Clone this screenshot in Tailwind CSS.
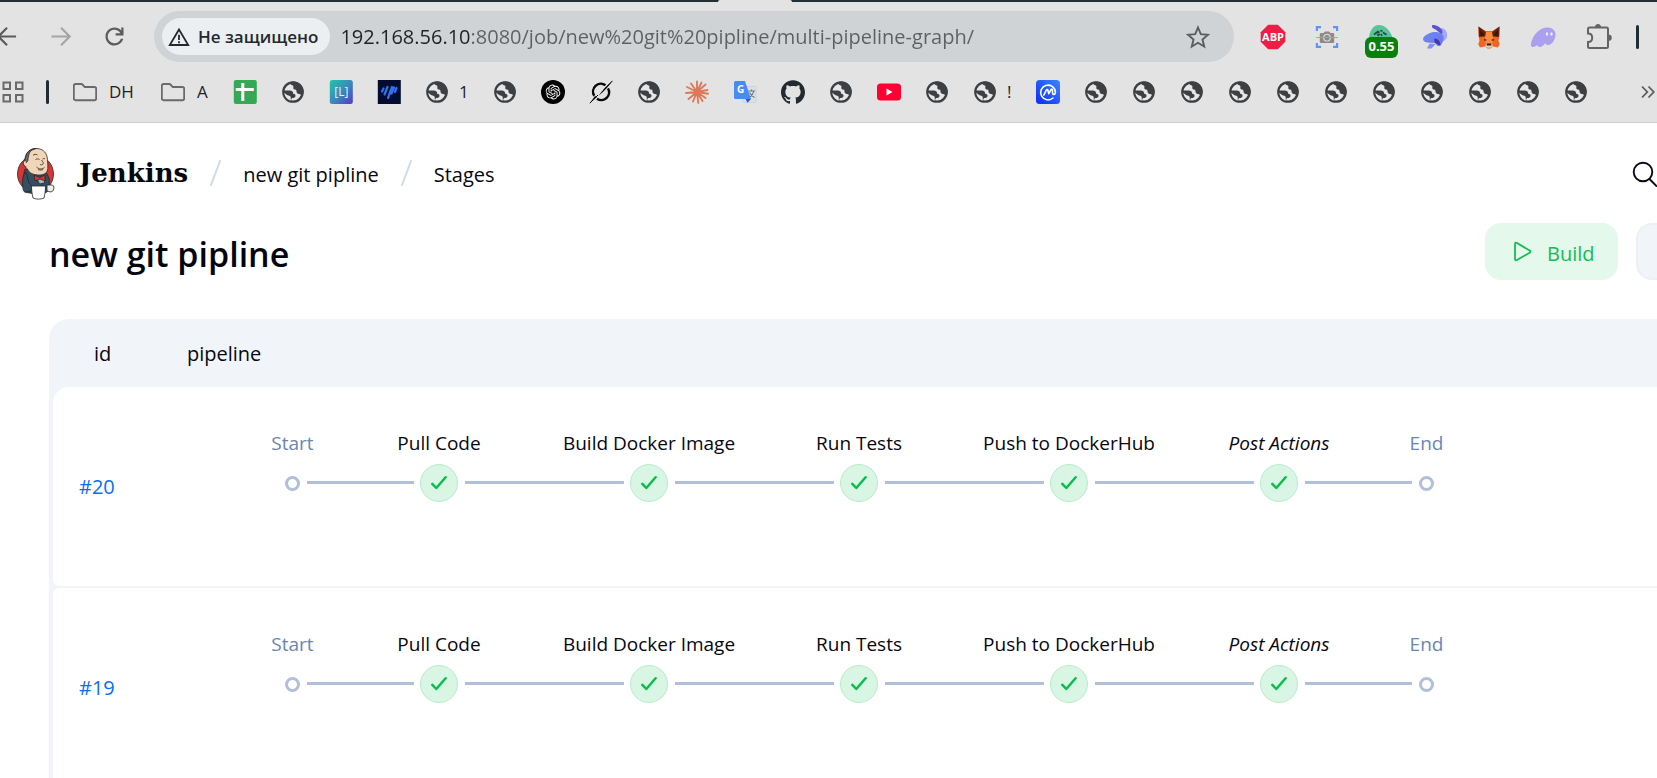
<!DOCTYPE html>
<html lang="ru">
<head>
<meta charset="utf-8">
<meta name="viewport" content="width=device-width, initial-scale=1">
<title>new git pipline - Stages [Jenkins]</title>
<script src="https://cdn.jsdelivr.net/npm/@tailwindcss/browser@4"></script>
</head>
<body class="h-screen overflow-hidden bg-white font-['Open_Sans','Noto_Sans',sans-serif] text-[#07070f]">

<!-- Shared icons -->
<svg class="hidden" aria-hidden="true">
  <symbol id="globe" viewBox="0 0 24 24">
    <circle cx="12" cy="12" r="9.700" fill="#e6e6e6" stroke="#3c4043" stroke-width="2.300"/>
    <path fill="#3c4043" d="M9.500 2C9 3.500 9.500 5 11 5.300c1.500.2 1.600 1.200 1.300 2.200-.3 1.200.7 2 1.900 2.100 1 .1 1.300.8 1.300 1.900 0 1.500 1.100 2.300 2.500 2.500 1.600.2 2 1.500 3.200 1.500L22.500 12C22.500 6 18 1.500 12 1.500z"/>
    <path fill="#3c4043" d="M2 10.600h6.700c2.200 0 3.400 1.200 3.500 3.200 1.700.1 2.600 1 2.300 2.500-.3 1.300-1.600 1.900-3.500 1.800L9.500 21C5 20 2 16 2 12z"/>
    <path fill="#e6e6e6" d="M3.400 12.800c2 2.200 3.500 2.600 5 3 1.300.4 1.400 1.500 1.400 2.600v2.200c-3.400-.8-6.200-4-6.400-7.800z"/>
  </symbol>
  <symbol id="folder" viewBox="0 0 24 24">
    <path d="M2.500 4h6.300l3 3H21.500a1.700 1.700 0 0 1 1.700 1.700V18.500a1.700 1.700 0 0 1-1.700 1.700H2.500a1.700 1.700 0 0 1-1.700-1.700V5.700A1.700 1.700 0 0 1 2.500 4z" fill="none" stroke="#6a6a6a" stroke-width="1.900"/>
  </symbol>
  <symbol id="check" viewBox="0 0 16 16">
    <path d="M1.300 8.800l4 4.200 9.300-10.700" fill="none" stroke="#09bf4b" stroke-width="2.500" stroke-linecap="round" stroke-linejoin="round"/>
  </symbol>
</svg>

<!-- Browser toolbar -->
<div class="flex h-[123px] flex-col border-b border-[#cdcdcd] bg-[#e3e3e3]">
  <div class="flex h-0.5 justify-center bg-[#232e35]">
    <div class="mr-[148px] h-0.5 w-[74px] rounded-t-xs bg-[#e3e3e3]"></div>
  </div>
  <div class="mt-[9px] flex h-[51px] items-center">
    <nav class="-ml-[7px] flex items-center gap-[27px]" aria-label="Browser navigation">
      <button class="size-[27px]" aria-label="Back"><svg viewBox="0 0 24 24" class="size-[27px]" fill="none" stroke="#5c5c5c" stroke-width="1.900"><path d="M20.500 12H5M12.500 4.200L4.800 12l7.700 7.800"/></svg></button>
      <button class="size-[27px]" aria-label="Forward"><svg viewBox="0 0 24 24" class="size-[27px]" fill="none" stroke="#a5a5a5" stroke-width="1.900"><path d="M4 12h15.500M12.500 4.200l7.700 7.800-7.700 7.800"/></svg></button>
      <button class="size-[27px]" aria-label="Reload"><svg viewBox="0 0 24 24" class="size-[27px]" fill="#5c5c5c"><path d="M12 20c-2.230 0-4.130-.770-5.680-2.320C4.770 16.130 4 14.230 4 12s.77-4.130 2.320-5.680C7.870 4.770 9.770 4 12 4c1.150 0 2.250.240 3.300.710A7.900 7.900 0 0 1 18 6.750V4h2v7h-7V9h4.200c-.530-.930-1.260-1.670-2.190-2.200A5.900 5.900 0 0 0 12 6c-1.670 0-3.080.580-4.250 1.750S6 10.330 6 12s.58 3.080 1.750 4.250S10.330 18 12 18c1.280 0 2.440-.370 3.480-1.100A5.850 5.850 0 0 0 17.650 14h2.100c-.470 1.770-1.420 3.210-2.850 4.330C15.470 19.440 13.830 20 12 20z"/></svg></button>
    </nav>
    <div class="ml-[26px] flex h-[51px] flex-1 items-center rounded-full bg-[#cfd3d6] pr-6 pl-2">
      <button class="flex h-[37px] items-center rounded-full bg-[#ebeff2] pr-3 pl-1.5 text-[17px] font-semibold whitespace-nowrap text-[#24282c]">
        <svg viewBox="0 0 22 20" class="mr-2 h-5 w-[22px]" fill="none" stroke="#24282c" stroke-width="1.800"><path d="M11 2.500L1.800 18h18.400z"/><path d="M11 7.800v5.200M11 14.200v2"/></svg>
        Не защищено
      </button>
      <input type="text" aria-label="Address" value="192.168.56.10:8080/job/new%20git%20pipline/multi-pipeline-graph/" class="ml-2.5 min-w-0 flex-1 bg-[linear-gradient(90deg,#1f2124_131px,#5d6063_131px)] bg-clip-text text-[20px] text-transparent outline-none">
      <button aria-label="Bookmark this page"><svg viewBox="0 0 24 24" class="size-6" fill="none" stroke="#5c5c5c" stroke-width="1.900"><path d="M12 2.500l2.800 6.700 7.200.6-5.500 4.700 1.700 7-6.200-3.700-6.200 3.700 1.700-7L2 9.800l7.200-.6z"/></svg></button>
    </div>
    <div class="ml-[27px] flex items-center gap-[30px]">
      <button class="size-6" aria-label="Adblock Plus"><svg viewBox="0 0 24 24" class="size-6 overflow-visible"><path d="M7.200-.3h9.600l7.500 7.500v9.600l-7.500 7.500H7.200l-7.500-7.500V7.200z" fill="#ed1e45"/><text x="12" y="16" text-anchor="middle" font-size="11" font-weight="700" fill="#fff" font-family="Open Sans">ABP</text></svg></button>
      <button class="size-6" aria-label="Screenshot"><svg viewBox="0 0 24 24" class="size-6"><path d="M1.900 6V2.200H6M18 2.200h4.100V6M1.900 18v3.800H6M18 21.800h4.100V18" fill="none" stroke="#5b96f3" stroke-width="2.200"/><path d="M6 8h2.500l1.500-1.500h4L15.500 8H18q1.200 0 1.200 1.200v7.600q0 1.200-1.200 1.200H6q-1.200 0-1.200-1.200V9.200Q4.800 8 6 8z" fill="#8b8b8b"/><circle cx="12" cy="12.700" r="3.300" fill="#8b8b8b" stroke="#d5d5d5" stroke-width="1.200"/><path d="M1 12.500h22" stroke="#e08a86" stroke-width=".9"/></svg></button>
      <button class="relative size-6" aria-label="Gas tracker"><svg viewBox="0 0 24 24" class="size-6"><path d="M0 13C.5 6 4 0 10 0c5 0 11 4 13.500 13z" fill="#57c596"/><path d="M5 9.500l4-3 1.500 1.200M11.500 5.500l2 .8M14 7.500l3.500 2.200M8 9.500h2l-1 1.500M12 9l1 2" fill="none" stroke="#24463a" stroke-width="1.600"/></svg>
        <span class="absolute top-3 -left-1 flex h-[21px] w-[33px] items-center justify-center rounded-md bg-[#08810b] text-[13px] font-bold text-white">0.55</span></button>
      <button class="size-6" aria-label="Rabby"><svg viewBox="0 0 24 24" class="size-6 overflow-visible"><defs><linearGradient id="rb" x1="0" x2="1" y1="0" y2="1"><stop offset="0" stop-color="#7286f6"/><stop offset="1" stop-color="#6a78e8"/></linearGradient></defs><path d="M18 3c4 0 7 4 6 9-.8 3-3 4.500-5.500 4.300z" fill="#a4a9f4"/><path d="M9.500 0C14 0 18.500 2.500 19.500 6.500c.200 1.500-.5 2.500-1.500 2.800C16 7 13 4.500 10.500 3.500 8.800 2.600 8.500 1 9.500 0z" fill="#5b54cd"/><path d="M6.500 18.500l6 .5-4 4.500H4z" fill="#8490f5"/><path d="M0 14C.5 11 4 9 8.500 7.500c5-1.300 10.500 0 12 4 .7 3-1 7-3.500 9.500h-2.500l-2.500-3-8-.500C1.500 17 0 16 0 14z" fill="url(#rb)"/><path d="M11 14c3-1 6 1 6.500 6.500L12 18z" fill="#4438ae"/></svg></button>
      <button class="size-6" aria-label="MetaMask"><svg viewBox="0 0 24 24" class="size-6"><path d="M1.500 1.500L8.500 6h7l7-4.500v9l-1 5.500 1.300 3-1.800 3.500-5-1-2.500 2h-3l-2.500-2-5 1L1.200 19l1.300-3-1-5.500z" fill="#f26422"/><path d="M1.500 1.500L9 7v4.500L2 12zM22.500 1.500L15 7v4.500l7 .5z" fill="#62230e"/><path d="M3 5l4.500 5L3.500 11zM21 5l-4.500 5 4 1z" fill="#3b1308"/><path d="M9 7h6l1.500 8-1.500 4H9l-1.500-4z" fill="#ff8a3c"/><path d="M7 13.800l3 1.300-2.500.9zM17 13.800l-3 1.300 2.500.9z" fill="#392018"/><path d="M9 19h6l1 2.500-2.500 1.300h-3L8 21.500z" fill="#dccfc5"/><path d="M10 18.500h4l.5 2h-5z" fill="#30211c"/></svg></button>
      <button class="size-6" aria-label="Phantom"><svg viewBox="0 0 24 24" class="size-6 overflow-visible"><path d="M0 20.500C0 13 7 2.500 16.500 2.500c5 0 8.500 3.500 8 8-.5 5-4 9.500-7.500 9.500-2.500 0-2.800-1.500-2.300-2.800-1.700 2.800-3.800 4.800-6.200 4.800-1.500 0-2.200-.9-2-2.200C4.500 22 .5 23 0 20.500z" fill="#ab9ff0"/><ellipse cx="16" cy="9" rx="1.200" ry="1.800" fill="#efedff"/><ellipse cx="20.500" cy="9" rx="1.200" ry="1.800" fill="#efedff"/></svg></button>
      <button class="size-[26px]" aria-label="Extensions"><svg viewBox="0 0 26 26" class="size-[26px] overflow-visible"><path d="M5 3.500H21.500a1.500 1.500 0 0 1 1.500 1.500V22.500a1.500 1.500 0 0 1-1.500 1.500H4.500A1.500 1.500 0 0 1 3 22.500V18c2.600 0 4.200-1.800 4.200-4.200S5.600 9.500 3 9.500V5A1.500 1.500 0 0 1 4.500 3.500z" fill="none" stroke="#646464" stroke-width="2"/><path d="M10 3.500a3 3.500 0 0 1 6 0zM23 10.500a3.500 3 0 0 1 0 6.500z" fill="#646464"/></svg></button>
    </div>
    <div class="mr-[18px] ml-[25px] h-6 w-[3px] rounded-sm bg-[#1f2d34]"></div>
  </div>

  <!-- Bookmarks -->
  <nav class="mt-[18px] flex h-6 items-center gap-6 pl-0.5 text-[17px] text-[#1f2226]" aria-label="Bookmarks">
    <button class="w-[22px]" aria-label="Apps"><svg viewBox="0 0 22 22" class="size-[22px]" fill="none" stroke="#6a6a6a" stroke-width="2"><path d="M1.500 1.500h6.500v6.500h-6.500zM14 1.500h6.500v6.500H14zM1.500 14h6.500v6.500h-6.500zM14 14h6.500v6.500H14z"/></svg></button>
    <span class="-ml-0.5 h-6 w-[3px] rounded-sm bg-[#1f2d34]"></span>
    <a href="#" class="flex w-16 items-center gap-3"><svg class="size-6"><use href="#folder"/></svg>DH</a>
    <a href="#" class="flex w-12 items-center gap-3"><svg class="size-6 shrink-0"><use href="#folder"/></svg>A</a>
    <a href="#" aria-label="Sheets" class="w-6"><svg viewBox="0 0 24 24" class="size-6"><rect x=".8" width="23" height="24" rx="2" fill="#34a853"/><path d="M2.800 9.500h18M9.800 3v18" stroke="#fff" stroke-width="3"/></svg></a>
    <a href="#" aria-label="Bookmark"><svg class="size-6"><use href="#globe"/></svg></a>
    <a href="#" aria-label="L"><svg viewBox="0 0 24 24" class="size-6"><defs><linearGradient id="lg" x1="0" y1="0" x2="1" y2="1"><stop offset="0" stop-color="#1fc7aa"/><stop offset=".55" stop-color="#3d85bb"/><stop offset="1" stop-color="#5338cb"/></linearGradient></defs><rect x=".8" width="23" height="24" rx="2.500" fill="url(#lg)"/><text x="12.300" y="16" text-anchor="middle" font-size="12" fill="#dff3f3" font-family="Open Sans">[L]</text></svg></a>
    <a href="#" aria-label="Dashboard"><svg viewBox="0 0 24 24" class="size-6"><rect x=".8" width="23" height="24" fill="#020c2e"/><path d="M5 11.500l1.500-3M7.500 14.500L10.500 7M11 18L15 7M14.500 13.500l2.500-6M18 12l1.500-4" stroke="#2e72f2" stroke-width="2.200" stroke-linecap="round"/></svg></a>
    <a href="#" class="flex w-11 items-center gap-2.5"><svg class="size-6"><use href="#globe"/></svg>1</a>
    <a href="#" aria-label="Bookmark"><svg class="size-6"><use href="#globe"/></svg></a>
    <a href="#" aria-label="ChatGPT"><svg viewBox="0 0 24 24" class="size-6"><circle cx="12" cy="12" r="12" fill="#000"/><path transform="translate(4.600 4.600) scale(.617)" fill="#fff" d="M22.2819 9.8211a5.9847 5.9847 0 0 0-.5157-4.9108 6.0462 6.0462 0 0 0-6.5098-2.9A6.0651 6.0651 0 0 0 4.9807 4.1818a5.9847 5.9847 0 0 0-3.9977 2.9 6.0462 6.0462 0 0 0 .7427 7.0966 5.98 5.98 0 0 0 .511 4.9107 6.051 6.051 0 0 0 6.5146 2.9001A5.9847 5.9847 0 0 0 13.2599 24a6.0557 6.0557 0 0 0 5.7718-4.2058 5.9894 5.9894 0 0 0 3.9977-2.9001 6.0557 6.0557 0 0 0-.7475-7.0729zm-9.022 12.6081a4.4755 4.4755 0 0 1-2.8764-1.0408l.1419-.0804 4.7783-2.7582a.7948.7948 0 0 0 .3927-.6813v-6.7369l2.02 1.1686a.071.071 0 0 1 .038.052v5.5826a4.504 4.504 0 0 1-4.4945 4.4944zm-9.6607-4.1254a4.4708 4.4708 0 0 1-.5346-3.0137l.142.0852 4.783 2.7582a.7712.7712 0 0 0 .7806 0l5.8428-3.3685v2.3324a.0804.0804 0 0 1-.0332.0615L9.74 19.9502a4.4992 4.4992 0 0 1-6.1408-1.6464zM2.3408 7.8956a4.485 4.485 0 0 1 2.3655-1.9728V11.6a.7664.7664 0 0 0 .3879.6765l5.8144 3.3543-2.0201 1.1685a.0757.0757 0 0 1-.071 0l-4.8303-2.7865A4.504 4.504 0 0 1 2.3408 7.872zm16.5963 3.8558L13.1038 8.364 15.1192 7.2a.0757.0757 0 0 1 .071 0l4.8303 2.7913a4.4944 4.4944 0 0 1-.6765 8.1042v-5.6772a.79.79 0 0 0-.407-.667zm2.0107-3.0231l-.142-.0852-4.7735-2.7818a.7759.7759 0 0 0-.7854 0L9.409 9.2297V6.8974a.0662.0662 0 0 1 .0284-.0615l4.8303-2.7866a4.4992 4.4992 0 0 1 6.6802 4.66zM8.3065 12.863l-2.02-1.1638a.0804.0804 0 0 1-.038-.0567V6.0742a4.4992 4.4992 0 0 1 7.3757-3.4537l-.142.0805L8.704 5.459a.7948.7948 0 0 0-.3927.6813zm1.0976-2.3654l2.602-1.4998 2.6069 1.4998v2.9994l-2.5974 1.4997-2.6067-1.4997Z"/></svg></a>
    <a href="#" aria-label="Grok"><svg viewBox="0 0 24 24" class="size-6"><path d="M16.500 5.300A7.800 7.800 0 0 0 5.300 15.800M19 8.300A7.800 7.800 0 0 1 8 18.800" fill="none" stroke="#0a0a0a" stroke-width="2.500"/><path d="M23.500.8C20 6 16 10.500 9.500 15.800 13 11 18.500 5 23.500.8zM.8 23.200L6 16l2 1z" fill="#0a0a0a"/><path d="M.8 23.200L9 15M23.500.8L15 9.500" stroke="#0a0a0a" stroke-width="1"/></svg></a>
    <a href="#" aria-label="Bookmark"><svg class="size-6"><use href="#globe"/></svg></a>
    <a href="#" aria-label="Claude"><svg viewBox="0 0 24 24" class="size-6" stroke="#de7858" stroke-width="1.900" stroke-linecap="round"><path d="M12 12V1.500M12 12l4.500-9.500M12 12l8.500-7.500M12 12l10.500-2M12 12l11 1.800M12 12l8.500 6M12 12l5.500 9M12 12l1.300 10.800M12 12L8 21.500M12 12l-8.500 7M12 12L1 13M12 12L2 7M12 12L6 3.500"/></svg></a>
    <a href="#" aria-label="Google Translate"><svg viewBox="0 0 24 24" class="size-6"><rect x="10" y="6.500" width="13" height="16" rx="1" fill="#dedfe0" stroke="#c9caca" stroke-width=".6"/><path d="M2.500 1H12l6 18H2.500A1.500 1.500 0 0 1 1 17.500v-15A1.500 1.500 0 0 1 2.500 1z" fill="#4a8af4"/><path d="M12.500 19H18l-3.500 3.800z" fill="#3a4ec0"/><text x="7.600" y="12.600" text-anchor="middle" font-size="10" font-weight="700" fill="#fff" font-family="Open Sans">G</text><path d="M15.500 11h6.500M18.500 9.500V11M20.800 11c-.5 3-2.500 5-4 6M16.500 12.500c1 2 3 4 5 5" fill="none" stroke="#607d80" stroke-width="1.100"/></svg></a>
    <a href="#" aria-label="GitHub"><svg viewBox="0 0 24 24" class="size-6"><path fill="#22292f" d="M12 .297c-6.630 0-12 5.373-12 12 0 5.303 3.438 9.800 8.205 11.385.6.113.82-.258.82-.577 0-.285-.01-1.040-.015-2.040-3.338.724-4.042-1.610-4.042-1.610C4.422 18.070 3.633 17.700 3.633 17.700c-1.087-.744.084-.729.084-.729 1.205.084 1.838 1.236 1.838 1.236 1.070 1.835 2.809 1.305 3.495.998.108-.776.417-1.305.76-1.605-2.665-.3-5.466-1.332-5.466-5.930 0-1.310.465-2.380 1.235-3.220-.135-.303-.54-1.523.105-3.176 0 0 1.005-.322 3.300 1.230.96-.267 1.980-.399 3-.405 1.020.006 2.040.138 3 .405 2.280-1.552 3.285-1.230 3.285-1.230.645 1.653.24 2.873.12 3.176.765.84 1.230 1.910 1.230 3.220 0 4.610-2.805 5.625-5.475 5.920.42.36.81 1.096.81 2.220 0 1.606-.015 2.896-.015 3.286 0 .315.21.69.825.57C20.565 22.092 24 17.592 24 12.297c0-6.627-5.373-12-12-12"/></svg></a>
    <a href="#" aria-label="Bookmark"><svg class="size-6"><use href="#globe"/></svg></a>
    <a href="#" aria-label="YouTube"><svg viewBox="0 0 24 24" class="size-6"><rect y="3.600" width="24" height="16.800" rx="3.500" fill="#ff0033"/><path d="M9.500 8.500v7l6-3.500z" fill="#fff"/></svg></a>
    <a href="#" aria-label="Bookmark"><svg class="size-6"><use href="#globe"/></svg></a>
    <a href="#" class="flex w-[39px] items-center gap-2.5"><svg class="size-6 shrink-0"><use href="#globe"/></svg>!</a>
    <a href="#" aria-label="CoinMarketCap"><svg viewBox="0 0 24 24" class="size-6"><defs><linearGradient id="cm" x1="1" y1="0" x2="0" y2="1"><stop offset="0" stop-color="#3c86fb"/><stop offset="1" stop-color="#0a2cfa"/></linearGradient></defs><rect width="24" height="24" rx="3.500" fill="url(#cm)"/><path d="M17 18a7.400 7.400 0 1 1 2.400-6.200c0 1.800-.5 2.600-1.400 2.600-1 0-1.500-.8-1.500-2V10.200c0-1.200-1-1.400-1.500-.5l-2.200 4-.9-3.500c-.3-1-1.200-1-1.600-.1l-2.500 5" fill="none" stroke="#fff" stroke-width="1.600" stroke-linecap="round" stroke-linejoin="round"/></svg></a>
    <a href="#" aria-label="Bookmark"><svg class="size-6"><use href="#globe"/></svg></a>
    <a href="#" aria-label="Bookmark"><svg class="size-6"><use href="#globe"/></svg></a>
    <a href="#" aria-label="Bookmark"><svg class="size-6"><use href="#globe"/></svg></a>
    <a href="#" aria-label="Bookmark"><svg class="size-6"><use href="#globe"/></svg></a>
    <a href="#" aria-label="Bookmark"><svg class="size-6"><use href="#globe"/></svg></a>
    <a href="#" aria-label="Bookmark"><svg class="size-6"><use href="#globe"/></svg></a>
    <a href="#" aria-label="Bookmark"><svg class="size-6"><use href="#globe"/></svg></a>
    <a href="#" aria-label="Bookmark"><svg class="size-6"><use href="#globe"/></svg></a>
    <a href="#" aria-label="Bookmark"><svg class="size-6"><use href="#globe"/></svg></a>
    <a href="#" aria-label="Bookmark"><svg class="size-6"><use href="#globe"/></svg></a>
    <a href="#" aria-label="Bookmark"><svg class="size-6"><use href="#globe"/></svg></a>
    <button class="mr-0.5 ml-auto" aria-label="More bookmarks"><svg viewBox="0 0 14 14" class="size-3.5" fill="none" stroke="#5c5c5c" stroke-width="1.800"><path d="M1 1.500L6.300 7 1 12.500M7.500 1.500L12.800 7l-5.300 5.500"/></svg></button>
  </nav>
</div>

<!-- Jenkins header -->
<header class="flex h-[100px] items-center pl-4 text-[20px] whitespace-nowrap">
  <a href="#" class="flex items-center gap-6">
    <svg viewBox="0 0 39 53" class="h-[53px] w-[39px]" stroke="#2a2528" stroke-width=".8" stroke-linejoin="round">
      <ellipse cx="19.500" cy="27" rx="18" ry="18.500" fill="#d33833"/>
      <path d="M9 22c5 3 18 3 21 3l3 6c1 5 0 12-2 14-6 2-15 2-22 0C7 38 7 28 9 22z" fill="#335061"/>
      <path d="M10 25c-3 2-4 8-3.500 13 .5 4 1 7 2.500 7l6-1 1-5-3-3z" fill="#335061"/>
      <path d="M9 14C8.500 6 14 1 21 1.500c7 .5 10 5 10.500 11 0 2 .5 5 .3 9C31.500 26 28 28 23.500 28 17 28 13 26 11.500 22 9 21 7.500 17 9 14z" fill="#f0d6b7"/>
      <path d="M9 17C8.500 8 12 2 20 1.500c-3 1-6 2-7 5.500-.5 3-1 3-1 6.500z" fill="#6d6b6d"/>
      <path d="M9.500 13.500c-3 0-3 5.500 1 6.500" fill="#f0d6b7"/>
      <path d="M17 8.500c1-1.500 3-1.500 4.500-.5M19.500 12.500c1.500-.8 3-.8 4 0M26.500 12c1-.6 2-.5 2.500 0M25.500 13c1.500 2 2.500 3.500 1 4.500-1 .5-2 .3-2.500-.2M20.500 20c2.500 2.500 6 2.500 8 .5M22 22.500c2 .8 3.500.6 5 0" fill="none"/>
      <path d="M21 32l5-3 3 2-.5 5-5 1z" fill="#9fb6c3"/>
      <path d="M18 28l6 2.500 5-2.500v6l-5-2-5 2z" fill="#d33833"/>
      <path d="M31 38h5q2 0 2 3t-3 4l-4-1z" fill="#f2eeee"/>
      <path d="M15.500 39h14c0 4-.5 8-1.500 12-3 1.500-8 1.500-11 0-1-4-1.500-8-1.500-12z" fill="#fff"/>
    </svg>
    <span class="font-['DejaVu_Serif',serif] text-[26px] font-bold">Jenkins</span>
  </a>
  <nav class="flex items-center gap-[22px] pl-[22px]" aria-label="Breadcrumb">
    <svg viewBox="0 0 11 26" class="h-[26px] w-[11px]" stroke="#d0dae7" stroke-width="2" stroke-linecap="round" aria-hidden="true"><path d="M1 25L10 1"/></svg>
    <a href="#" class="pt-1">new git pipline</a>
    <svg viewBox="0 0 11 26" class="h-[26px] w-[11px]" stroke="#d0dae7" stroke-width="2" stroke-linecap="round" aria-hidden="true"><path d="M1 25L10 1"/></svg>
    <a href="#" class="pt-1">Stages</a>
  </nav>
  <button class="ml-auto" aria-label="Search"><svg viewBox="0 0 28 28" class="size-7" fill="none" stroke="#0b0b18" stroke-width="1.900"><circle cx="14" cy="13" r="9.300"/><path d="M20.500 20l7 7" stroke-linecap="round"/></svg></button>
</header>

<main class="pl-[49px]">
  <div class="flex h-[57px] items-center">
    <h1 class="pt-1 text-[34px] leading-[48px] font-semibold whitespace-nowrap text-[#04040f]">new git pipline</h1>
    <button class="ml-auto flex h-[57px] w-[133px] items-center gap-3.5 rounded-2xl bg-[#e4f8ec] pl-7 text-[20px] text-[#12bd52]">
      <svg viewBox="0 0 20 22" class="h-[22px] w-5" fill="none" stroke="#12bd52" stroke-width="1.800" stroke-linejoin="round"><path d="M2 3.200Q2 1 4 2L16.700 9.600Q18.200 10.700 16.700 11.700L4 19Q2 20 2 18z"/></svg>
      <span class="pt-1">Build</span>
    </button>
    <button class="ml-[18px] h-[57px] w-[21px] rounded-l-2xl border-2 border-r-0 border-[#ecf0f4] bg-[#f1f5f9]" aria-label="Configure"></button>
  </div>

  <div class="mt-[39px] overflow-hidden rounded-tl-[20px] bg-[#f1f5f9] pt-0.5 pl-1">
    <table class="w-full border-separate border-spacing-x-0 border-spacing-y-0.5 text-left">
      <thead class="text-[20px]">
        <tr class="h-[62px]">
          <th class="w-[108px] pl-[41px] font-normal" scope="col">id</th>
          <th class="pl-[26px] font-normal" scope="col">pipeline</th>
        </tr>
      </thead>
      <tbody class="text-[19px] leading-7">
        <tr class="h-[199px]">
          <td class="rounded-tl-[16px] rounded-bl-md bg-white pl-[26px] text-[20px]"><a href="#" class="text-[#0b6ef0]">#20</a></td>
          <td class="bg-white pt-[42px] pl-[124px] align-top">
            <ol class="flex items-end whitespace-nowrap">
              <li class="flex w-[15px] flex-col items-center gap-[7px] text-[#6a86b4]"><span>Start</span><span class="flex h-[38px] items-center"><i class="size-[15px] rounded-full border-3 border-[#b1bfd8]"></i></span></li>
              <li class="mr-1.5 mb-[18px] ml-[7px] h-[3px] w-[107px] bg-[#b1bfd8]" aria-hidden="true"></li>
              <li class="flex w-[38px] flex-col items-center gap-[7px]"><span>Pull Code</span><span class="flex size-[38px] items-center justify-center rounded-full border border-[#b9edcc] bg-[#d9f5e3]"><svg class="size-4"><use href="#check"/></svg></span></li>
              <li class="mr-1.5 mb-[18px] ml-[7px] h-[3px] w-[159px] bg-[#b1bfd8]" aria-hidden="true"></li>
              <li class="flex w-[38px] flex-col items-center gap-[7px]"><span>Build Docker Image</span><span class="flex size-[38px] items-center justify-center rounded-full border border-[#b9edcc] bg-[#d9f5e3]"><svg class="size-4"><use href="#check"/></svg></span></li>
              <li class="mr-1.5 mb-[18px] ml-[7px] h-[3px] w-[159px] bg-[#b1bfd8]" aria-hidden="true"></li>
              <li class="flex w-[38px] flex-col items-center gap-[7px]"><span>Run Tests</span><span class="flex size-[38px] items-center justify-center rounded-full border border-[#b9edcc] bg-[#d9f5e3]"><svg class="size-4"><use href="#check"/></svg></span></li>
              <li class="mr-1.5 mb-[18px] ml-[7px] h-[3px] w-[159px] bg-[#b1bfd8]" aria-hidden="true"></li>
              <li class="flex w-[38px] flex-col items-center gap-[7px]"><span>Push to DockerHub</span><span class="flex size-[38px] items-center justify-center rounded-full border border-[#b9edcc] bg-[#d9f5e3]"><svg class="size-4"><use href="#check"/></svg></span></li>
              <li class="mr-1.5 mb-[18px] ml-[7px] h-[3px] w-[159px] bg-[#b1bfd8]" aria-hidden="true"></li>
              <li class="flex w-[38px] flex-col items-center gap-[7px]"><span class="italic">Post Actions</span><span class="flex size-[38px] items-center justify-center rounded-full border border-[#b9edcc] bg-[#d9f5e3]"><svg class="size-4"><use href="#check"/></svg></span></li>
              <li class="mr-[7px] mb-[18px] ml-[7px] h-[3px] w-[107px] bg-[#b1bfd8]" aria-hidden="true"></li>
              <li class="flex w-[15px] flex-col items-center gap-[7px] text-[#6a86b4]"><span>End</span><span class="flex h-[38px] items-center"><i class="size-[15px] rounded-full border-3 border-[#b1bfd8]"></i></span></li>
            </ol>
          </td>
        </tr>
        <tr class="h-[199px]">
          <td class="rounded-l-md bg-white pl-[26px] text-[20px]"><a href="#" class="text-[#0b6ef0]">#19</a></td>
          <td class="bg-white pt-[42px] pl-[124px] align-top">
            <ol class="flex items-end whitespace-nowrap">
              <li class="flex w-[15px] flex-col items-center gap-[7px] text-[#6a86b4]"><span>Start</span><span class="flex h-[38px] items-center"><i class="size-[15px] rounded-full border-3 border-[#b1bfd8]"></i></span></li>
              <li class="mr-1.5 mb-[18px] ml-[7px] h-[3px] w-[107px] bg-[#b1bfd8]" aria-hidden="true"></li>
              <li class="flex w-[38px] flex-col items-center gap-[7px]"><span>Pull Code</span><span class="flex size-[38px] items-center justify-center rounded-full border border-[#b9edcc] bg-[#d9f5e3]"><svg class="size-4"><use href="#check"/></svg></span></li>
              <li class="mr-1.5 mb-[18px] ml-[7px] h-[3px] w-[159px] bg-[#b1bfd8]" aria-hidden="true"></li>
              <li class="flex w-[38px] flex-col items-center gap-[7px]"><span>Build Docker Image</span><span class="flex size-[38px] items-center justify-center rounded-full border border-[#b9edcc] bg-[#d9f5e3]"><svg class="size-4"><use href="#check"/></svg></span></li>
              <li class="mr-1.5 mb-[18px] ml-[7px] h-[3px] w-[159px] bg-[#b1bfd8]" aria-hidden="true"></li>
              <li class="flex w-[38px] flex-col items-center gap-[7px]"><span>Run Tests</span><span class="flex size-[38px] items-center justify-center rounded-full border border-[#b9edcc] bg-[#d9f5e3]"><svg class="size-4"><use href="#check"/></svg></span></li>
              <li class="mr-1.5 mb-[18px] ml-[7px] h-[3px] w-[159px] bg-[#b1bfd8]" aria-hidden="true"></li>
              <li class="flex w-[38px] flex-col items-center gap-[7px]"><span>Push to DockerHub</span><span class="flex size-[38px] items-center justify-center rounded-full border border-[#b9edcc] bg-[#d9f5e3]"><svg class="size-4"><use href="#check"/></svg></span></li>
              <li class="mr-1.5 mb-[18px] ml-[7px] h-[3px] w-[159px] bg-[#b1bfd8]" aria-hidden="true"></li>
              <li class="flex w-[38px] flex-col items-center gap-[7px]"><span class="italic">Post Actions</span><span class="flex size-[38px] items-center justify-center rounded-full border border-[#b9edcc] bg-[#d9f5e3]"><svg class="size-4"><use href="#check"/></svg></span></li>
              <li class="mr-[7px] mb-[18px] ml-[7px] h-[3px] w-[107px] bg-[#b1bfd8]" aria-hidden="true"></li>
              <li class="flex w-[15px] flex-col items-center gap-[7px] text-[#6a86b4]"><span>End</span><span class="flex h-[38px] items-center"><i class="size-[15px] rounded-full border-3 border-[#b1bfd8]"></i></span></li>
            </ol>
          </td>
        </tr>
      </tbody>
    </table>
  </div>
</main>
</body>
</html>
